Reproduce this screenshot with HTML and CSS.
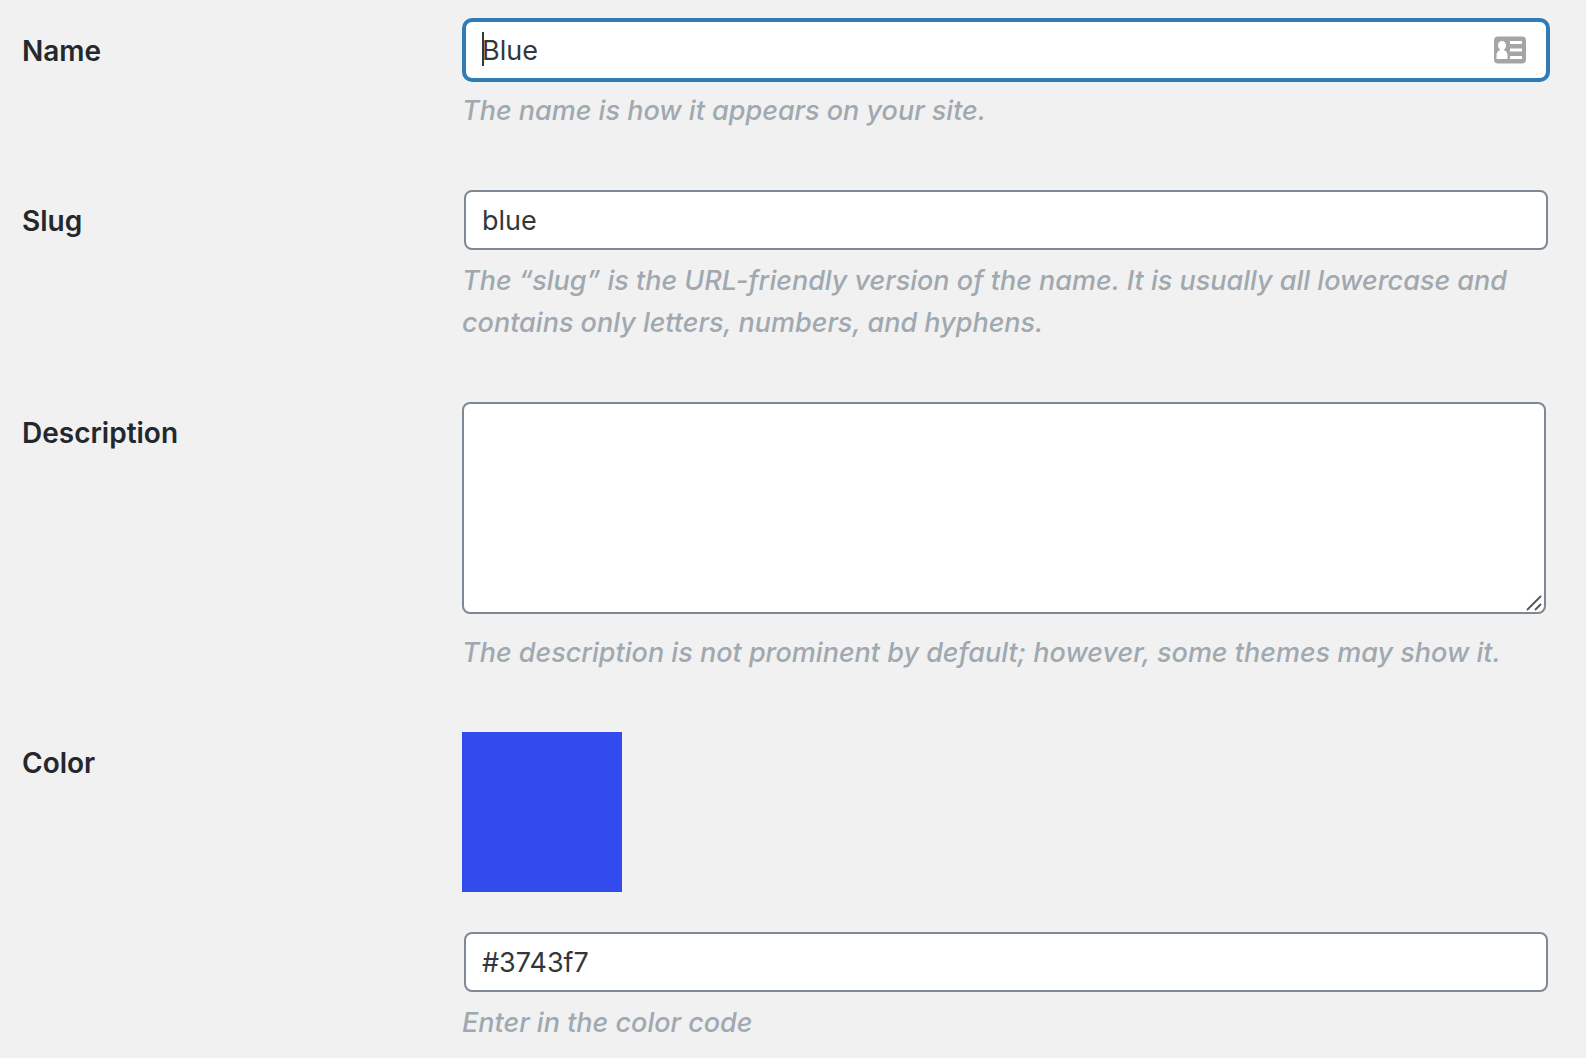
FILE: index.html
```
<!DOCTYPE html>
<html lang="en">
<head>
  <meta charset="UTF-8">
  <meta name="viewport" content="width=device-width, initial-scale=1">
  <title>Edit Color</title>
  <link rel="stylesheet" href="styles.css">
</head>
<body>
  <form class="edit-form">
    <div class="form-row">
      <label for="name">Name</label>
      <div class="field">
        <div class="input-wrap">
          <input type="text" id="name" class="focused" value="Blue">
          <span class="caret"></span>
          <svg class="card-icon" viewBox="0 0 32 28" aria-hidden="true">
            <rect x="0" y="0.500" width="32" height="27" rx="4" fill="#a5a5a5"/>
            <ellipse cx="8" cy="9.500" rx="4" ry="4.500" fill="#fff"/>
            <path d="M6 12h4v2c2.500 1 3.500 3 3.500 5v4h-11v-4c0-2 1-4 3.500-5z" fill="#fff"/>
            <path d="M16 5h12v3H16zM16 12.500h12v3H16zM16 20h12v3H16z" fill="#fff"/>
          </svg>
        </div>
        <p class="description">The name is how it appears on your site.</p>
      </div>
    </div>

    <div class="form-row">
      <label for="slug">Slug</label>
      <div class="field">
        <div class="input-wrap">
          <input type="text" id="slug" value="blue">
        </div>
        <p class="description">The “slug” is the URL-friendly version of the name. It is usually all lowercase and contains only letters, numbers, and hyphens.</p>
      </div>
    </div>

    <div class="form-row">
      <label for="description">Description</label>
      <div class="field">
        <div class="textarea-wrap">
          <textarea id="description" rows="5"></textarea>
          <svg class="grip" viewBox="0 0 16 16" aria-hidden="true">
            <path d="M1 15L15 1M9 15l6-6" fill="none" stroke="#555" stroke-width="1.800"/>
          </svg>
        </div>
        <p class="description">The description is not prominent by default; however, some themes may show it.</p>
      </div>
    </div>

    <div class="form-row">
      <label for="color">Color</label>
      <div class="field">
        <div class="swatch"></div>
        <div class="input-wrap">
          <input type="text" id="color" value="#3743f7">
        </div>
        <p class="description">Enter in the color code</p>
      </div>
    </div>
  </form>
</body>
</html>
```
FILE: styles.css
```
* {
  box-sizing: border-box;
}
body {
  margin: 0;
  background: #f1f1f1;
  color: #23282d;
  font-family: Inter, "Liberation Sans", sans-serif;
  font-size: 27px;
  line-height: 42px;
}
.edit-form {
  display: flex;
  flex-direction: column;
  gap: 58px;
  padding: 20px 36px 14px 22px;
}
.form-row {
  display: grid;
  grid-template-columns: 440px 1fr;
}
label {
  padding-top: 10px;
  font-size: 28px;
  font-weight: 600;
}
.input-wrap {
  position: relative;
  margin: 0 2px;
}
input,
textarea {
  display: block;
  width: 100%;
  border: 2px solid #7e8993;
  border-radius: 8px;
  background: #fff;
  color: #32373c;
  font: inherit;
  outline: none;
}
input {
  height: 60px;
  padding: 0 16px;
}
input.focused {
  border-color: #2f7cb6;
  box-shadow: 0 0 0 2px #2f7cb6;
}
/* text cursor in the active field */
.caret {
  position: absolute;
  top: 12px;
  left: 18px;
  width: 2px;
  height: 34px;
  background: #32373c;
}
.card-icon {
  position: absolute;
  top: 16px;
  right: 22px;
  width: 32px;
  height: 28px;
}
.textarea-wrap {
  position: relative;
  margin: 0 4px 18px 0;
}
textarea {
  height: 212px;
  padding: 4px 12px;
  resize: none;
}
.grip {
  position: absolute;
  right: 4px;
  bottom: 3px;
  width: 16px;
  height: 16px;
}
.swatch {
  width: 160px;
  height: 160px;
  margin-bottom: 40px;
  background: #324bed;
}
.description {
  margin: 0;
  color: #a0a8b0;
  font-style: oblique 10deg;
  font-weight: 500;
}
.input-wrap + .description {
  margin-top: 10px;
}
```
